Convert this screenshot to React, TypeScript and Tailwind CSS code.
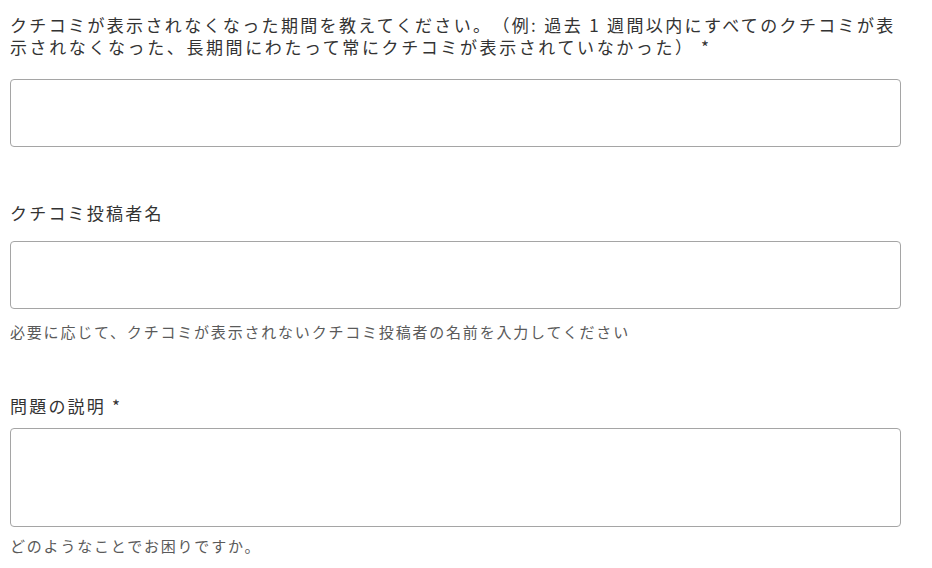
import React from "react";

const font = { fontFamily: '"Noto Sans CJK JP", "Noto Sans", sans-serif' };

export default function App() {
  return (
    <div
      className="w-[932px] h-[568px] bg-white overflow-hidden px-[10px] pt-[14px] [text-spacing-trim:space-all]"
      style={font}
    >
      <div className="w-[891px]">
        <p className="text-[17px] leading-[22px] text-[#333] whitespace-nowrap">
          <span className="block tracking-[2.35px]">
            クチコミが表示されなくなった期間を教えてください。（例: 過去 1 週間以内にすべてのクチコミが表
          </span>
          <span className="block tracking-[2.6px]">
            示されなくなった、長期間にわたって常にクチコミが表示されていなかった） *
          </span>
        </p>
        <div className="mt-[21px] h-[68px] rounded-[4px] border border-[#a5a5a5] bg-white" />

        <p className="mt-[55px] text-[17px] leading-[22px] tracking-[2.2px] text-[#333]">
          クチコミ投稿者名
        </p>
        <div className="mt-[17px] h-[68px] rounded-[4px] border border-[#a5a5a5] bg-white" />
        <p className="mt-[13px] text-[15px] leading-[20px] tracking-[1.8px] text-[#5a5a5a]">
          必要に応じて、クチコミが表示されないクチコミ投稿者の名前を入力してください
        </p>

        <p className="mt-[53px] text-[17px] leading-[22px] tracking-[2.2px] text-[#333]">
          問題の説明 *
        </p>
        <div className="mt-[11px] h-[99px] rounded-[4px] border border-[#a5a5a5] bg-white" />
        <p className="mt-[9px] text-[15px] leading-[20px] tracking-[1.8px] text-[#5a5a5a]">
          どのようなことでお困りですか。
        </p>
      </div>
    </div>
  );
}
